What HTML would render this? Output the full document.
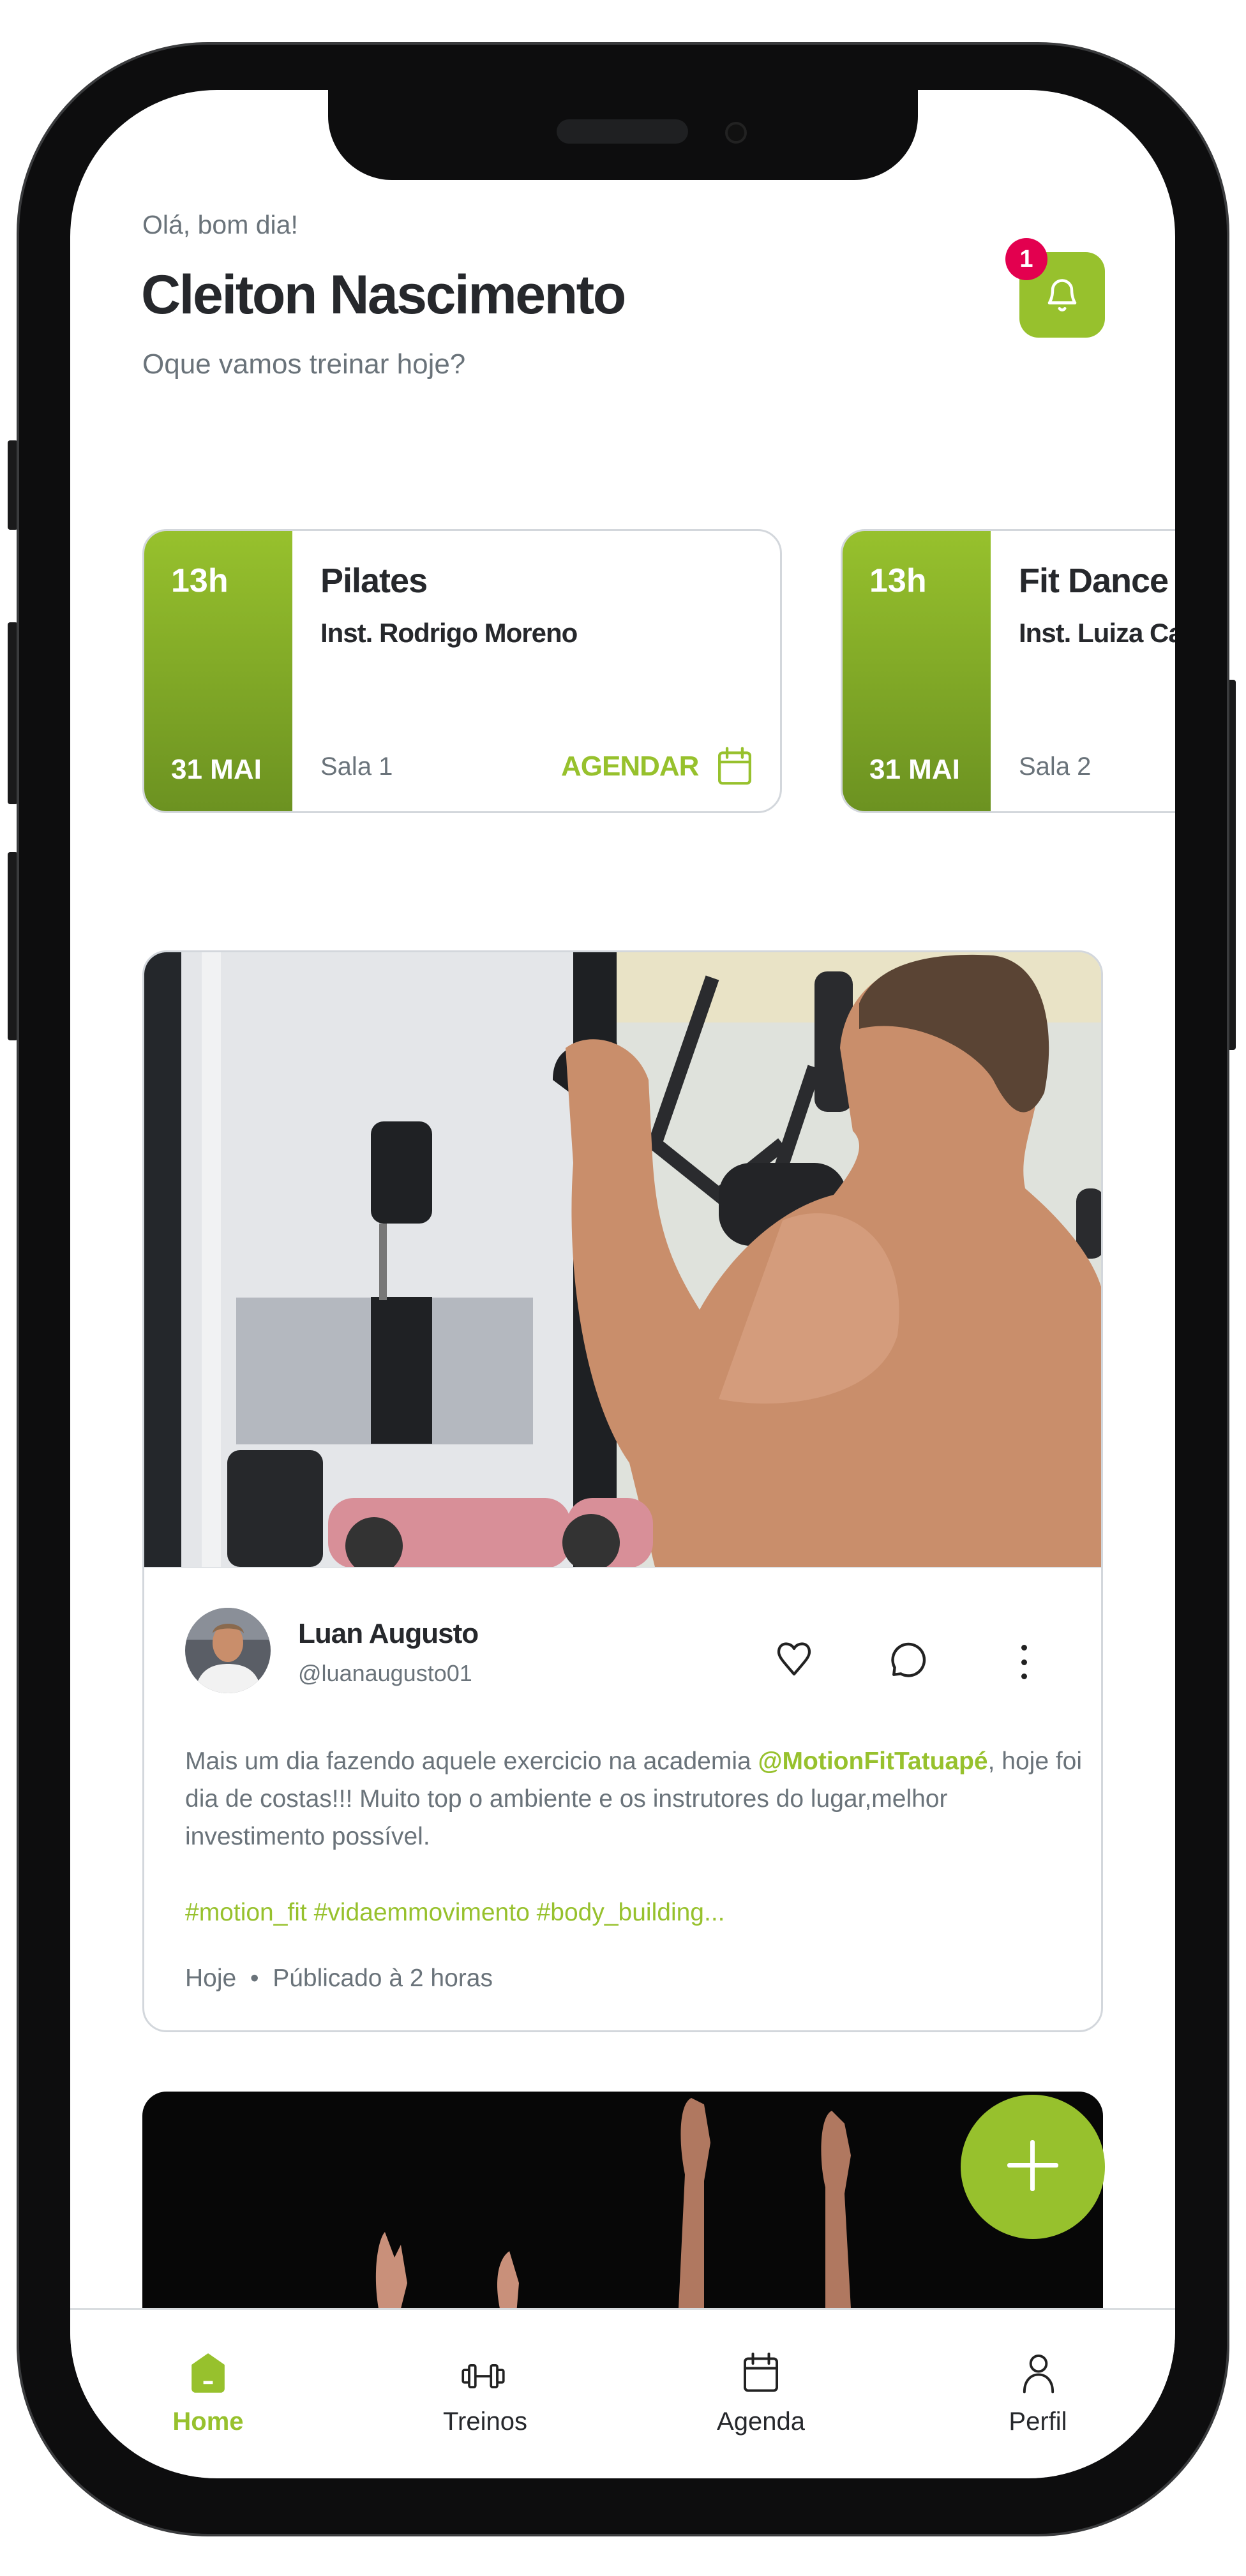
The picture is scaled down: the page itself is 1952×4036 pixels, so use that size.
<!DOCTYPE html>
<html><head><meta charset="utf-8">
<style>
*{margin:0;padding:0;box-sizing:border-box}
body{width:1952px;height:4036px;background:#fff;position:relative;overflow:hidden;font-family:"Liberation Sans",sans-serif}
.a{position:absolute;white-space:nowrap}
.phone{position:absolute;left:26px;top:66px;width:1900px;height:3908px;background:#0d0d0e;border-radius:300px;border:4px solid #3a3b3d}
.btn{position:absolute;background:#1a1a1b;border-radius:4px}
.screen{position:absolute;left:110px;top:141px;width:1731px;height:3742px;background:#fff;border-radius:230px;overflow:hidden}
.notch{position:absolute;left:404px;top:0;width:924px;height:141px;background:#0d0d0e;border-radius:0 0 100px 100px}
.card{position:absolute;top:688px;height:445px;width:1002px;border:3px solid #d3d7dc;border-radius:38px;overflow:hidden;background:#fff}
.strip{position:absolute;left:0;top:0;bottom:0;width:232px;background:linear-gradient(#97c12d,#6c9221)}
.w{color:#fff;font-weight:bold}
.dk{color:#26282c}
.gr{color:#6a737a}
.gn{color:#97c12d}
</style></head><body>
<div class="btn" style="left:12px;top:690px;width:16px;height:140px"></div>
<div class="btn" style="left:12px;top:975px;width:16px;height:285px"></div>
<div class="btn" style="left:12px;top:1335px;width:16px;height:295px"></div>
<div class="btn" style="left:1922px;top:1065px;width:14px;height:580px"></div>
<div class="phone"></div>
<div class="screen">
  <div class="notch"></div>
  <div style="position:absolute;left:762px;top:46px;width:206px;height:38px;border-radius:19px;background:#1f2022"></div>
  <div style="position:absolute;left:1026px;top:50px;width:34px;height:34px;border-radius:50%;background:#111;border:4px solid #222"></div>

  <div class="a gr" style="left:113px;top:191px;font-size:41px;line-height:41px">Olá, bom dia!</div>
  <div class="a dk" style="left:111px;top:278px;font-size:86px;line-height:86px;font-weight:bold;letter-spacing:-2.5px">Cleiton Nascimento</div>
  <div class="a gr" style="left:113px;top:408px;font-size:44px;line-height:44px">Oque vamos treinar hoje?</div>

  <div style="position:absolute;left:1487px;top:254px;width:134px;height:134px;border-radius:30px;background:#97c12d"></div>
  <svg class="a" style="left:1524px;top:288px" width="60" height="66" viewBox="0 0 24 26" fill="none" stroke="#fff" stroke-width="1.8" stroke-linecap="round" stroke-linejoin="round"><path d="M6 10a6 6 0 0 1 12 0c0 5 2 8 2 8H4s2-3 2-8z"/><path d="M4 18h16"/><path d="M10.3 21.5a2 2 0 0 0 3.4 0"/></svg>
  <div style="position:absolute;left:1465px;top:232px;width:66px;height:66px;border-radius:50%;background:#e3004f;color:#fff;font-size:38px;font-weight:bold;text-align:center;line-height:66px">1</div>

  <div class="card" style="left:113px">
    <div class="strip"></div>
    <div class="a w" style="left:42px;top:52px;font-size:52px;line-height:52px">13h</div>
    <div class="a w" style="left:42px;top:352px;font-size:44px;line-height:44px">31 MAI</div>
    <div class="a dk" style="left:276px;top:51px;font-size:54px;line-height:54px;font-weight:bold;letter-spacing:-1px">Pilates</div>
    <div class="a dk" style="left:276px;top:139px;font-size:42px;line-height:42px;font-weight:bold;letter-spacing:-1px">Inst. Rodrigo Moreno</div>
    <div class="a gr" style="left:276px;top:349px;font-size:40px;line-height:40px">Sala 1</div>
    <div class="a gn" style="left:653px;top:347px;font-size:44px;line-height:44px;font-weight:bold;letter-spacing:-1px">AGENDAR</div>
    <svg class="a" style="left:896px;top:338px" width="58" height="62" viewBox="0 0 24 26" fill="none" stroke="#97c12d" stroke-width="1.8" stroke-linecap="round"><rect x="2" y="4" width="20" height="20" rx="2"/><path d="M2 10h20M7 1v6M17 1v6"/></svg>
  </div>
  <div class="card" style="left:1207px;width:700px">
    <div class="strip"></div>
    <div class="a w" style="left:42px;top:52px;font-size:52px;line-height:52px">13h</div>
    <div class="a w" style="left:42px;top:352px;font-size:44px;line-height:44px">31 MAI</div>
    <div class="a dk" style="left:276px;top:51px;font-size:54px;line-height:54px;font-weight:bold;letter-spacing:-1px">Fit Dance</div>
    <div class="a dk" style="left:276px;top:139px;font-size:42px;line-height:42px;font-weight:bold;letter-spacing:-1px">Inst. Luiza Carvalho</div>
    <div class="a gr" style="left:276px;top:349px;font-size:40px;line-height:40px">Sala 2</div>
  </div>

  <div style="position:absolute;left:113px;top:1348px;width:1505px;height:1695px;border:3px solid #d3d7dc;border-radius:38px;overflow:hidden;background:#fff">
    <svg style="position:absolute;left:0;top:0" width="1505" height="963" viewBox="0 0 1505 963">
      <rect width="1505" height="963" fill="#e4e6e9"/>
      <rect x="740" y="0" width="765" height="963" fill="#dfe2dc"/>
      <rect x="740" y="0" width="765" height="110" fill="#e9e3c6"/>
      <rect x="0" y="0" width="58" height="963" fill="#24272b"/>
      <rect x="90" y="0" width="30" height="963" fill="#f1f2f3"/>
      <rect x="672" y="0" width="68" height="963" fill="#1e2023"/>
      <rect x="144" y="541" width="465" height="230" fill="#8d919c" opacity="0.55"/>
      <rect x="355" y="265" width="96" height="160" rx="20" fill="#1f2124"/>
      <rect x="355" y="540" width="96" height="230" fill="#1f2124"/>
      <rect x="368" y="425" width="12" height="120" fill="#777"/>
      <path d="M890 40 L800 300 L900 380 L1000 300" stroke="#2a2b2e" stroke-width="22" fill="none"/>
      <path d="M1050 180 L960 450" stroke="#2a2b2e" stroke-width="22" fill="none"/>
      <rect x="1050" y="30" width="60" height="220" rx="20" fill="#2a2b2e"/>
      <rect x="900" y="330" width="200" height="130" rx="50" fill="#232427"/>
      <rect x="1460" y="370" width="45" height="110" rx="20" fill="#2a2b2e"/>
      <path d="M640 200 C640 150 680 140 700 150 L740 140 L760 240 L720 260 Z" fill="#1e1f22"/>
      <path d="M800 963 L760 800 C690 700 660 500 672 330 L660 150 C700 120 770 140 790 200 L795 300 C800 420 820 480 870 560 C920 470 1000 400 1080 380 C1120 330 1130 300 1110 280 L1090 150 C1100 40 1200 0 1300 5 C1400 10 1420 120 1400 220 C1390 280 1370 320 1380 370 C1450 430 1505 500 1505 560 L1505 963 Z" fill="#c98e6b"/>
      <path d="M1000 420 C1100 380 1200 450 1180 600 C1150 700 1000 720 900 700 Z" fill="#d9a383" opacity="0.7"/>
      <path d="M1120 80 C1150 10 1250 0 1330 5 C1410 15 1430 120 1410 220 C1380 280 1350 240 1330 200 C1300 150 1200 100 1120 120 Z" fill="#5a4434"/>
      <rect x="130" y="780" width="150" height="183" rx="20" fill="#26282b"/>
      <rect x="288" y="855" width="380" height="110" rx="40" fill="#d88f98"/>
      <rect x="662" y="855" width="135" height="110" rx="40" fill="#d88f98"/>
      <circle cx="360" cy="930" r="45" fill="#333"/>
      <circle cx="700" cy="925" r="45" fill="#333"/>
    </svg>
    <div style="position:absolute;left:0;top:963px;width:100%;height:2px;background:#e0e3e6"></div>
    <svg class="a" style="left:64px;top:1027px" width="134" height="134" viewBox="0 0 134 134"><defs><clipPath id="c"><circle cx="67" cy="67" r="67"/></clipPath></defs><g clip-path="url(#c)"><rect width="134" height="134" fill="#5a5e66"/><rect x="0" y="0" width="134" height="50" fill="#8a8f98"/><ellipse cx="67" cy="55" rx="24" ry="30" fill="#c98e6b"/><path d="M43 40 C45 20 90 20 92 40 C85 30 50 30 43 40Z" fill="#8a6a4e"/><path d="M15 134 C20 95 45 88 67 88 C90 88 115 95 120 134Z" fill="#f2f2f2"/></g></svg>
    <div class="a dk" style="left:241px;top:1046px;font-size:44px;line-height:44px;font-weight:bold;letter-spacing:-1px">Luan Augusto</div>
    <div class="a gr" style="left:241px;top:1112px;font-size:36px;line-height:36px">@luanaugusto01</div>
    <svg class="a" style="left:986px;top:1077px" width="64" height="60" viewBox="0 0 24 22" fill="none" stroke="#222" stroke-width="1.6" stroke-linejoin="round"><path d="M12 5C10 1 3 1 3 7c0 3 3 6 9 13 6-7 9-10 9-13 0-6-7-6-9-2z"/></svg>
    <svg class="a" style="left:1166px;top:1074px" width="66" height="66" viewBox="0 0 24 24" fill="none" stroke="#222" stroke-width="1.6" stroke-linejoin="round"><path d="M3.5 17A9 9 0 1 1 7 20.5L3 21z"/></svg>
    <div style="position:absolute;left:1374px;top:1085px;width:9px;height:9px;border-radius:50%;background:#222"></div>
    <div style="position:absolute;left:1374px;top:1108px;width:9px;height:9px;border-radius:50%;background:#222"></div>
    <div style="position:absolute;left:1374px;top:1130px;width:9px;height:9px;border-radius:50%;background:#222"></div>
    <div class="a gr" style="left:64px;top:1238px;font-size:39px;line-height:59px">Mais um dia fazendo aquele exercicio na academia <b class="gn">@MotionFitTatuapé</b>, hoje foi<br>dia de costas!!! Muito top o ambiente e os instrutores do lugar,melhor<br>investimento possível.</div>
    <div class="a gn" style="left:64px;top:1475px;font-size:39px;line-height:59px">#motion_fit #vidaemmovimento #body_building...</div>
    <div class="a gr" style="left:64px;top:1578px;font-size:39px;line-height:59px">Hoje &nbsp;•&nbsp; Públicado à 2 horas</div>
  </div>

  <div style="position:absolute;left:113px;top:3136px;width:1505px;height:700px;border-radius:38px;overflow:hidden;background:#070707">
    <svg width="1505" height="700" viewBox="0 0 1505 700">
      <path d="M370 340 C360 280 370 230 380 220 L395 260 L405 240 L415 300 L400 360 Z" fill="#c9907a"/>
      <path d="M560 340 C550 290 560 260 575 250 L590 300 L585 360 Z" fill="#c9907a"/>
      <path d="M840 340 L850 130 C840 80 840 20 860 10 L880 20 L890 80 L880 140 L880 340 Z" fill="#b07860"/>
      <path d="M1070 340 L1070 150 C1060 110 1060 40 1080 30 L1100 50 L1110 100 L1100 160 L1110 340 Z" fill="#b07860"/>
    </svg>
  </div>
  <div style="position:absolute;left:1395px;top:3141px;width:226px;height:226px;border-radius:50%;background:#97c12d"></div>
  <div style="position:absolute;left:1468px;top:3248px;width:80px;height:7px;background:#fff;border-radius:3px"></div>
  <div style="position:absolute;left:1504px;top:3212px;width:7px;height:80px;background:#fff;border-radius:3px"></div>

  <div style="position:absolute;left:0;top:3475px;width:1731px;height:270px;background:#fff;border-top:3px solid #d9dde0"></div>
  <svg class="a" style="left:186px;top:3545px" width="60" height="64" viewBox="0 0 24 26"><path d="M12 1L22 8V23a2 2 0 0 1-2 2H4a2 2 0 0 1-2-2V8z" fill="#97c12d" stroke="#97c12d" stroke-width="1" stroke-linejoin="round"/><rect x="9" y="18" width="6" height="2" fill="#fff"/></svg>
  <div class="a gn" style="left:106px;top:3633px;width:220px;text-align:center;font-size:40px;line-height:40px;font-weight:bold">Home</div>
  <svg class="a" style="left:612px;top:3560px" width="70" height="44" viewBox="0 0 28 18" fill="none" stroke="#222" stroke-width="1.5"><rect x="1" y="5" width="4" height="8" rx="1"/><rect x="5" y="2" width="4" height="14" rx="1"/><rect x="19" y="2" width="4" height="14" rx="1"/><rect x="23" y="5" width="4" height="8" rx="1"/><path d="M9 9h10"/></svg>
  <div class="a dk" style="left:540px;top:3633px;width:220px;text-align:center;font-size:40px;line-height:40px">Treinos</div>
  <svg class="a" style="left:1052px;top:3544px" width="60" height="66" viewBox="0 0 24 26" fill="none" stroke="#222" stroke-width="1.6" stroke-linecap="round"><rect x="2" y="4" width="20" height="20" rx="2"/><path d="M2 10h20M7 1v6M17 1v6"/></svg>
  <div class="a dk" style="left:972px;top:3633px;width:220px;text-align:center;font-size:40px;line-height:40px">Agenda</div>
  <svg class="a" style="left:1492px;top:3545px" width="50" height="64" viewBox="0 0 20 26" fill="none" stroke="#222" stroke-width="1.6" stroke-linecap="round"><circle cx="10" cy="7" r="5"/><path d="M1 25c0-7 4-11 9-11s9 4 9 11"/></svg>
  <div class="a dk" style="left:1406px;top:3633px;width:220px;text-align:center;font-size:40px;line-height:40px">Perfil</div>
</div>
</body></html>
